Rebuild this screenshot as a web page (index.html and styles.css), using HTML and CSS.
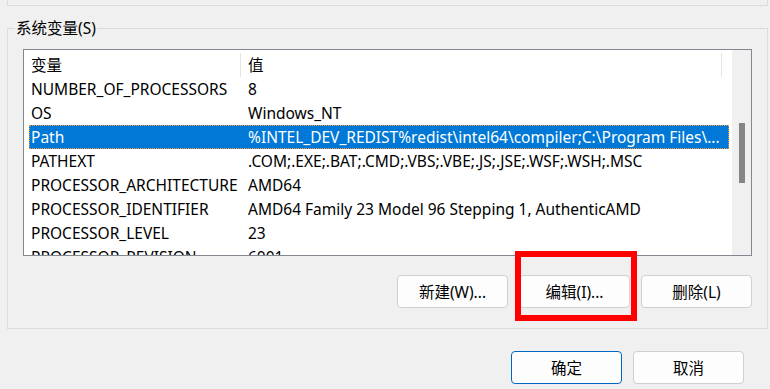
FILE: index.html
```html
<!DOCTYPE html>
<html lang="zh-CN">
<head>
    <meta charset="UTF-8">
    <title>环境变量</title>
    <link rel="stylesheet" href="styles.css">
</head>
<body>
    <div class="user-group"></div>

    <fieldset class="group">
        <legend>系统变量(S)</legend>

        <div class="list">
            <div class="list-body">
                <div class="row head">
                    <div class="cell name">变量</div>
                    <div class="cell value">值</div>
                </div>
                <div class="row">
                    <div class="cell name">NUMBER_OF_PROCESSORS</div>
                    <div class="cell value">8</div>
                </div>
                <div class="row">
                    <div class="cell name">OS</div>
                    <div class="cell value">Windows_NT</div>
                </div>
                <div class="row selected">
                    <div class="cell name">Path</div>
                    <div class="cell value">%INTEL_DEV_REDIST%redist\intel64\compiler;C:\Program Files\...</div>
                </div>
                <div class="row">
                    <div class="cell name">PATHEXT</div>
                    <div class="cell value">.COM;.EXE;.BAT;.CMD;.VBS;.VBE;.JS;.JSE;.WSF;.WSH;.MSC</div>
                </div>
                <div class="row">
                    <div class="cell name">PROCESSOR_ARCHITECTURE</div>
                    <div class="cell value">AMD64</div>
                </div>
                <div class="row">
                    <div class="cell name">PROCESSOR_IDENTIFIER</div>
                    <div class="cell value">AMD64 Family 23 Model 96 Stepping 1, AuthenticAMD</div>
                </div>
                <div class="row">
                    <div class="cell name">PROCESSOR_LEVEL</div>
                    <div class="cell value">23</div>
                </div>
                <div class="row">
                    <div class="cell name">PROCESSOR_REVISION</div>
                    <div class="cell value">6001</div>
                </div>
            </div>
            <div class="scrollbar">
                <div class="thumb"></div>
            </div>
        </div>

        <div class="actions">
            <button class="btn">新建(W)...</button>
            <span class="marked">
                <button class="btn">编辑(I)...</button>
                <span class="highlight"></span>
            </span>
            <button class="btn">删除(L)</button>
        </div>
    </fieldset>

    <div class="dialog-actions">
        <button class="btn primary">确定</button>
        <button class="btn">取消</button>
    </div>
</body>
</html>
```

FILE: styles.css
```css
body {
    margin: 0;
    padding: 0 2px 0 7px;
    background: #f0f0f0;
    font-family: "Noto Sans", "Noto Sans CJK SC", sans-serif;
    font-size: 15.5px;
    color: #000;
    overflow: hidden;
}
.user-group {
    height: 5px;
    border: 1px solid #dcdcdc;
    border-top: none;
}
.group {
    margin: 12px 0 0 0;
    padding: 11px 15px 20px 15px;
    border: 1px solid #dcdcdc;
    min-width: 0;
}
.group legend {
    padding: 0 1px;
    margin-left: -8px;
    line-height: 20px;
}

.list {
    display: flex;
    height: 205px;
    border: 1px solid #828790;
    background: #fff;
}
.list-body {
    flex: 1;
    overflow: hidden;
    padding-top: 3px;
}
.row {
    display: grid;
    grid-template-columns: 212px 481px;
    height: 24px;
    line-height: 24px;
    margin-left: 5px;
    width: 700px;
    white-space: nowrap;
}
.cell {
    overflow: hidden;
}
.name {
    padding-left: 2px;
}
.value {
    padding-left: 7px;
}
.head .cell {
    border-right: 1px solid #e5e5e5;
}
.head .name {
    margin-left: -5px;
    padding-left: 7px;
}
.selected {
    background: #0078d7;
    color: #fff;
    outline: 1px dotted #f39a2e;
    outline-offset: -1px;
}
.scrollbar {
    width: 20px;
    background: #f0f0f0;
    border-left: 1px solid #fff;
    box-sizing: border-box;
    padding-top: 73px;
}
.thumb {
    width: 6px;
    height: 60px;
    margin: 0 auto;
    background: #858585;
}

.actions {
    display: flex;
    justify-content: flex-end;
    gap: 11px;
    margin-top: 19px;
}
.btn {
    width: 111px;
    height: 33px;
    padding: 0;
    font-family: inherit;
    font-size: 15.5px;
    color: #000;
    background: #fdfdfd;
    border: 1px solid #d0d0d0;
    border-radius: 4px;
}
.btn.primary {
    border-color: #0067c0;
    background: #fdfdfd;
}
.marked {
    position: relative;
    display: flex;
}
.highlight {
    position: absolute;
    left: -4px;
    top: -24px;
    width: 110px;
    height: 58px;
    border: 6px solid #ff0000;
}

.dialog-actions {
    display: flex;
    justify-content: flex-end;
    gap: 11px;
    margin: 22px 24px 0 0;
}
.dialog-actions .btn {
    width: 111px;
    height: 33px;
}
```
